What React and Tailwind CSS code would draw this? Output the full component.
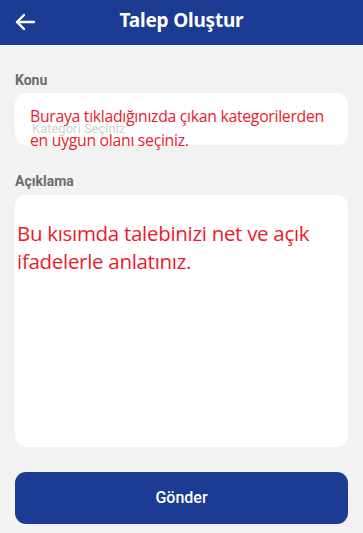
import React from 'react';

const Header = () => (
  <div className="h-[45px] bg-[#1c3c93] flex items-center relative">
    <button className="absolute left-[14px] top-[12px] text-white">
      <svg width="22" height="20" viewBox="0 0 22 20" fill="none" stroke="white" strokeWidth="2.4" strokeLinecap="round" strokeLinejoin="round">
        <path d="M20 10H3" />
        <path d="M10 3L3 10l7 7" />
      </svg>
    </button>
    <h1 className="w-full text-center text-white text-[19px] font-bold font-['Noto_Sans',sans-serif] tracking-[-0.2px] mt-[-4px]">
      Talep Oluştur
    </h1>
  </div>
);

function App() {
  return (
    <div className="w-[363px] h-[533px] bg-[#f2f2f2] font-['Roboto',sans-serif] overflow-hidden">
      <Header />
      <div className="px-[15px]">
        <div className="pt-[27px] text-[14px] font-bold text-[#6b6b6b] leading-4">Konu</div>

        <div className="mt-[5px] h-[52px] bg-white rounded-[11px] relative">
          <span className="absolute left-[17px] top-[28px] text-[13px] text-[#d2d2d2] leading-4">Kategori Seçiniz</span>
          <p className="relative pt-[11px] pl-[15px] text-[15.8px] leading-[24px] text-[#ec1a2d] font-['Open_Sans',sans-serif] tracking-[-0.3px]">
            Buraya tıkladığınızda çıkan kategorilerden
            <br />
            en uygun olanı seçiniz.
          </p>
        </div>

        <div className="pt-[28px] text-[14px] font-bold text-[#6b6b6b] leading-4">Açıklama</div>

        <div className="mt-[6px] h-[252px] bg-white rounded-[11px]">
          <p className="pt-[24px] pl-[2px] text-[20.5px] leading-[28px] text-[#ec1a2d] font-['Open_Sans',sans-serif] tracking-[-0.3px]">
            Bu kısımda talebinizi net ve açık
            <br />
            ifadelerle anlatınız.
          </p>
        </div>

        <button className="mt-[25px] w-full h-[52px] bg-[#1c3c93] rounded-[11px] text-white text-[16px] font-medium">
          Gönder
        </button>
      </div>
    </div>
  );
}

export default App;
